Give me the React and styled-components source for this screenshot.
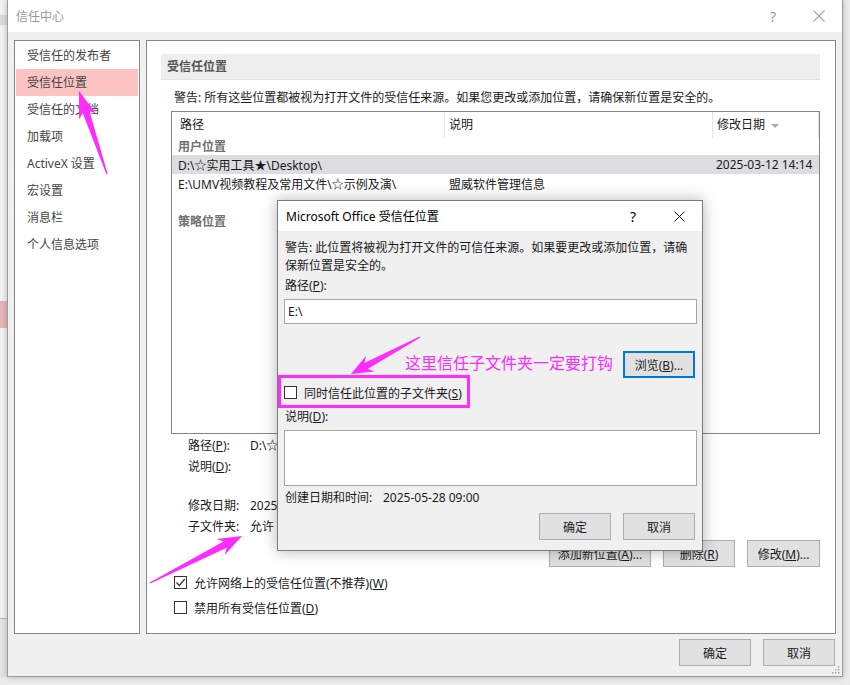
import React from "react";
import styled, { createGlobalStyle } from "styled-components";

const MAGENTA = "#ff2bff";
const BORDER = "#828790";

const GlobalStyle = createGlobalStyle`
  html, body {
    margin: 0;
    padding: 0;
  }
  body {
    width: 850px;
    height: 685px;
    overflow: hidden;
    background: #e9e9e9;
    font-family: "Noto Sans", "Noto Sans CJK SC", sans-serif;
    font-size: 12px;
    color: #1a1a1a;
  }
`;

const Desktop = styled.div`
  position: relative;
  display: flex;
  align-items: flex-start;
  width: 850px;
  height: 685px;
  background: #ececec;
`;

const BackWindow = styled.div`
  width: 7px;
  height: 677px;
  display: flex;
  flex-direction: column;
  background: #f2f2f2;
`;

const BackBlock = styled.div`
  height: ${(p) => p.$h}px;
  background: ${(p) => p.$bg || "transparent"};
  flex-shrink: 0;
`;

const Window = styled.div`
  position: relative;
  width: 836px;
  height: 677px;
  box-sizing: border-box;
  border: 1px solid #9c9c9c;
  border-top: none;
  background: #f0f0f0;
  box-shadow: 0 0 6px rgba(0, 0, 0, 0.25);
  display: flex;
  flex-direction: column;
`;

const TitleBar = styled.div`
  height: ${(p) => p.$h || 32}px;
  flex-shrink: 0;
  display: flex;
  align-items: center;
  background: #fff;
  padding-left: 8px;
  color: ${(p) => (p.$active ? "#000" : "#999")};
`;

const TitleText = styled.div`
  flex: 1;
  font-size: 12px;
  white-space: nowrap;
`;

const TitleButton = styled.div`
  width: 46px;
  display: flex;
  justify-content: center;
  align-items: center;
  font-size: 14px;
`;

const Body = styled.div`
  display: flex;
  gap: 6px;
  padding: 8px 6px 0 6px;
  height: 594px;
  flex-shrink: 0;
`;

const Nav = styled.div`
  width: 126px;
  box-sizing: border-box;
  border: 1px solid ${BORDER};
  background: #fff;
  padding-top: 1px;
  display: flex;
  flex-direction: column;
`;

const NavItem = styled.div`
  height: 27px;
  line-height: 27px;
  margin: 0 1px;
  padding-left: 11px;
  color: #444;
  background: ${(p) => (p.$selected ? "#fcc3c3" : "transparent")};
`;

const Main = styled.div`
  flex: 1;
  box-sizing: border-box;
  border: 1px solid ${BORDER};
  background: #fff;
  padding: 13px 15px 0 14px;
  display: flex;
  flex-direction: column;
`;

const SectionHeader = styled.div`
  height: 26px;
  line-height: 26px;
  background: #eeeeee;
  border-bottom: 1px solid #e2e2e2;
  box-sizing: border-box;
  padding-left: 6px;
  font-weight: bold;
  color: #555;
`;

const Content = styled.div`
  margin-left: 10px;
  display: flex;
  flex-direction: column;
`;

const Warning = styled.div`
  margin-top: 9px;
  line-height: 18px;
  padding-left: 3px;
  white-space: nowrap;
`;

const ListBox = styled.div`
  margin-top: 4px;
  height: 323px;
  box-sizing: border-box;
  border: 1px solid ${BORDER};
  overflow: hidden;
`;

const ListGrid = styled.div`
  display: grid;
  grid-template-columns: 273px 268px 1fr;
  height: ${(p) => p.$h}px;
  background: ${(p) => (p.$selected ? "#dcdce1" : "transparent")};
`;

const HeaderCell = styled.div`
  line-height: 26px;
  padding-left: ${(p) => p.$pad}px;
  border-right: 1px solid #e5e5e5;
  display: flex;
  align-items: center;
  gap: 6px;
  white-space: nowrap;
`;

const SortArrow = styled.span`
  width: 0;
  height: 0;
  border-left: 4px solid transparent;
  border-right: 4px solid transparent;
  border-top: 4px solid #a8a8a8;
  margin-top: 2px;
`;

const Cell = styled.div`
  padding-left: ${(p) => p.$pad}px;
  display: flex;
  align-items: center;
  white-space: nowrap;
  overflow: hidden;
`;

const GroupLabel = styled.div`
  height: 17px;
  line-height: 17px;
  padding-left: 6px;
  margin-top: ${(p) => p.$mt || 0}px;
  color: #707070;
  font-weight: 600;
`;

const Details = styled.div`
  padding-left: 17px;
  margin-top: 1px;
  display: flex;
  flex-direction: column;
`;

const DetailRow = styled.div`
  display: flex;
  height: 21px;
  line-height: 21px;
  margin-top: ${(p) => p.$mt || 0}px;
  white-space: nowrap;
`;

const DetailLabel = styled.div`
  width: 62px;
`;

const ButtonRow = styled.div`
  display: flex;
  justify-content: flex-end;
  gap: 12px;
  margin-top: ${(p) => p.$mt || 0}px;
  margin-right: ${(p) => p.$mr || 0}px;
`;

const Button = styled.div`
  width: ${(p) => p.$w || 72}px;
  height: 27px;
  box-sizing: border-box;
  border: 1px solid ${(p) => (p.$focus ? "#0078d7" : "#adadad")};
  box-shadow: ${(p) => (p.$focus ? "inset 0 0 0 1px #0078d7" : "none")};
  background: #e1e1e1;
  display: flex;
  align-items: center;
  justify-content: center;
  white-space: nowrap;
`;

const CheckRow = styled.label`
  display: flex;
  align-items: center;
  gap: 7px;
  height: 25px;
  padding-left: 3px;
  margin-top: ${(p) => p.$mt || 0}px;
  white-space: nowrap;
`;

const Box = styled.span`
  width: 13px;
  height: 13px;
  flex-shrink: 0;
  box-sizing: border-box;
  border: 1px solid #333;
  background: #fff;
  display: flex;
  align-items: center;
  justify-content: center;
`;

const Footer = styled.div`
  display: flex;
  justify-content: flex-end;
  gap: 12px;
  padding: 5px 7px 0 0;
`;

const Grip = styled.svg`
  position: absolute;
  right: 2px;
  bottom: 2px;
`;

const Dialog = styled.div`
  position: absolute;
  left: 277px;
  top: 200px;
  width: 426px;
  height: 351px;
  box-sizing: border-box;
  border: 1px solid #7a7a7a;
  background: #f0f0f0;
  box-shadow: 0 0 14px rgba(0, 0, 0, 0.3);
  display: flex;
  flex-direction: column;
`;

const DialogBody = styled.div`
  padding: 8px 5px 0 6px;
  display: flex;
  flex-direction: column;
`;

const TextLine = styled.div`
  line-height: 18px;
  height: 18px;
  padding-left: 1px;
  margin-top: ${(p) => p.$mt || 0}px;
  white-space: nowrap;
`;

const Field = styled.div`
  height: ${(p) => p.$h}px;
  flex-shrink: 0;
  margin-top: 4px;
  box-sizing: border-box;
  border: 1px solid #a6a6a6;
  background: #fff;
  padding-left: 3px;
  line-height: 23px;
`;

const BrowseRow = styled.div`
  display: flex;
  justify-content: flex-end;
  align-items: center;
  gap: 10px;
  margin-top: 27px;
  margin-right: 2px;
`;

const Annotation = styled.div`
  color: ${MAGENTA};
  font-size: 16px;
  line-height: 20px;
  margin-top: -4px;
  white-space: nowrap;
`;

const Highlight = styled.label`
  margin: -3px 0 0 -6px;
  width: 192px;
  height: 33px;
  flex-shrink: 0;
  box-sizing: border-box;
  border: 3px solid ${MAGENTA};
  display: flex;
  align-items: center;
  gap: 7px;
  padding: 2px 0 0 3px;
  white-space: nowrap;
`;

const DateRow = styled.div`
  display: flex;
  line-height: 18px;
  margin-top: 3px;
  padding-left: 1px;
  white-space: nowrap;
`;

const DateLabel = styled.div`
  width: 98px;
`;

const Overlay = styled.svg`
  position: absolute;
  left: 0;
  top: 0;
  pointer-events: none;
`;

const Check = ({ checked }) => (
  <Box>
    {checked && (
      <svg width="11" height="11" viewBox="0 0 11 11">
        <polyline points="1.5,5.5 4.3,8.5 9.8,2" fill="none" stroke="#333" strokeWidth="1.2" />
      </svg>
    )}
  </Box>
);

const CloseIcon = ({ color, size = 11 }) => (
  <svg width={size} height={size} viewBox="0 0 11 11">
    <path d="M0.5 0.5 L10.5 10.5 M10.5 0.5 L0.5 10.5" stroke={color} strokeWidth="1" />
  </svg>
);

const arrowPoints = ([tx, ty], [px, py], headLen, headHalf, neck, tail) => {
  const len = Math.hypot(px - tx, py - ty);
  const ux = (px - tx) / len;
  const uy = (py - ty) / len;
  const nx = -uy;
  const ny = ux;
  const bx = px - ux * headLen;
  const by = py - uy * headLen;
  const sx = px - ux * (headLen - 5);
  const sy = py - uy * (headLen - 5);
  return [
    [tx + nx * tail, ty + ny * tail],
    [sx + nx * neck, sy + ny * neck],
    [bx + nx * headHalf, by + ny * headHalf],
    [px, py],
    [bx - nx * headHalf, by - ny * headHalf],
    [sx - nx * neck, sy - ny * neck],
    [tx - nx * tail, ty - ny * tail],
  ]
    .map((p) => p.map((v) => v.toFixed(1)).join(","))
    .join(" ");
};

const arrows = [
  { from: [107, 174], to: [79, 91], head: 27, half: 9, neck: 3.5 },
  { from: [420, 337], to: [351, 374], head: 22, half: 9, neck: 3.5 },
  { from: [150, 583], to: [242, 536], head: 24, half: 9, neck: 3.5 },
];

const navItems = [
  "受信任的发布者",
  "受信任位置",
  "受信任的文档",
  "加载项",
  "ActiveX 设置",
  "宏设置",
  "消息栏",
  "个人信息选项",
];

export default function App() {
  return (
    <Desktop>
      <GlobalStyle />
      <BackWindow>
        <BackBlock $h={15} />
        <BackBlock $h={10} $bg="#dadada" />
        <BackBlock $h={276} />
        <BackBlock $h={27} $bg="#e9b6b9" />
        <BackBlock $h={290} />
        <BackBlock $h={1} $bg="#b5b5b5" />
        <BackBlock $h={58} $bg="#e4e4e4" />
      </BackWindow>

      <Window>
        <TitleBar>
          <TitleText>信任中心</TitleText>
          <TitleButton>?</TitleButton>
          <TitleButton>
            <CloseIcon color="#999" size={12} />
          </TitleButton>
        </TitleBar>

        <Body>
          <Nav>
            {navItems.map((item, i) => (
              <NavItem key={item} $selected={i === 1}>
                {item}
              </NavItem>
            ))}
          </Nav>

          <Main>
            <SectionHeader>受信任位置</SectionHeader>
            <Content>
              <Warning>
                警告: 所有这些位置都被视为打开文件的受信任来源。如果您更改或添加位置，请确保新位置是安全的。
              </Warning>
              <ListBox>
                <ListGrid $h={26}>
                  <HeaderCell $pad={8}>路径</HeaderCell>
                  <HeaderCell $pad={4}>说明</HeaderCell>
                  <HeaderCell $pad={4}>
                    修改日期
                    <SortArrow />
                  </HeaderCell>
                </ListGrid>
                <GroupLabel>用户位置</GroupLabel>
                <ListGrid $h={19} $selected>
                  <Cell $pad={6}>D:\☆实用工具★\Desktop\</Cell>
                  <Cell $pad={4} />
                  <Cell $pad={3}>2025-03-12 14:14</Cell>
                </ListGrid>
                <ListGrid $h={20}>
                  <Cell $pad={6}>E:\UMV视频教程及常用文件\☆示例及演\</Cell>
                  <Cell $pad={4}>盟威软件管理信息</Cell>
                  <Cell $pad={3} />
                </ListGrid>
                <GroupLabel $mt={19}>策略位置</GroupLabel>
              </ListBox>

              <Details>
                <DetailRow>
                  <DetailLabel>
                    路径(<u>P</u>):
                  </DetailLabel>
                  D:\☆实用工具★\Desktop\
                </DetailRow>
                <DetailRow>
                  <DetailLabel>
                    说明(<u>D</u>):
                  </DetailLabel>
                </DetailRow>
                <DetailRow $mt={18}>
                  <DetailLabel>修改日期:</DetailLabel>
                  2025-03-12 14:14
                </DetailRow>
                <DetailRow>
                  <DetailLabel>子文件夹:</DetailLabel>
                  允许
                </DetailRow>
              </Details>

              <ButtonRow $mt={3}>
                <Button $w={102}>
                  <span>
                    添加新位置(<u>A</u>)...
                  </span>
                </Button>
                <Button>
                  <span>
                    删除(<u>R</u>)
                  </span>
                </Button>
                <Button $w={73}>
                  <span>
                    修改(<u>M</u>)...
                  </span>
                </Button>
              </ButtonRow>

              <CheckRow $mt={3}>
                <Check checked />
                <span>
                  允许网络上的受信任位置(不推荐)(<u>W</u>)
                </span>
              </CheckRow>
              <CheckRow>
                <Check />
                <span>
                  禁用所有受信任位置(<u>D</u>)
                </span>
              </CheckRow>
            </Content>
          </Main>
        </Body>

        <Footer>
          <Button>确定</Button>
          <Button>取消</Button>
        </Footer>

        <Grip width="10" height="10" viewBox="0 0 10 10">
          {[
            [8, 2],
            [8, 5],
            [5, 5],
            [8, 8],
            [5, 8],
            [2, 8],
          ].map(([x, y]) => (
            <rect key={`${x}-${y}`} x={x} y={y} width="1.5" height="1.5" fill="#aaa" />
          ))}
        </Grip>
      </Window>

      <Dialog>
        <TitleBar $active $h={30}>
          <TitleText>Microsoft Office 受信任位置</TitleText>
          <TitleButton>?</TitleButton>
          <TitleButton>
            <CloseIcon color="#111" size={11} />
          </TitleButton>
        </TitleBar>
        <DialogBody>
          <TextLine>
            警告: 此位置将被视为打开文件的可信任来源。如果要更改或添加位置，请确
          </TextLine>
          <TextLine>保新位置是安全的。</TextLine>
          <TextLine $mt={2}>
            路径(<u>P</u>):
          </TextLine>
          <Field $h={25}>E:\</Field>
          <BrowseRow>
            <Annotation>这里信任子文件夹一定要打钩</Annotation>
            <Button $focus>
              <span>
                浏览(<u>B</u>)...
              </span>
            </Button>
          </BrowseRow>
          <Highlight>
            <Check />
            <span>
              同时信任此位置的子文件夹(<u>S</u>)
            </span>
          </Highlight>
          <TextLine>
            说明(<u>D</u>):
          </TextLine>
          <Field $h={56} />
          <DateRow>
            <DateLabel>创建日期和时间:</DateLabel>
            2025-05-28 09:00
          </DateRow>
          <ButtonRow $mt={6} $mr={2}>
            <Button>确定</Button>
            <Button>取消</Button>
          </ButtonRow>
        </DialogBody>
      </Dialog>

      <Overlay width="850" height="685">
        {arrows.map((a, i) => (
          <polygon
            key={i}
            points={arrowPoints(a.from, a.to, a.head, a.half, a.neck, 0.6)}
            fill={MAGENTA}
          />
        ))}
      </Overlay>
    </Desktop>
  );
}
